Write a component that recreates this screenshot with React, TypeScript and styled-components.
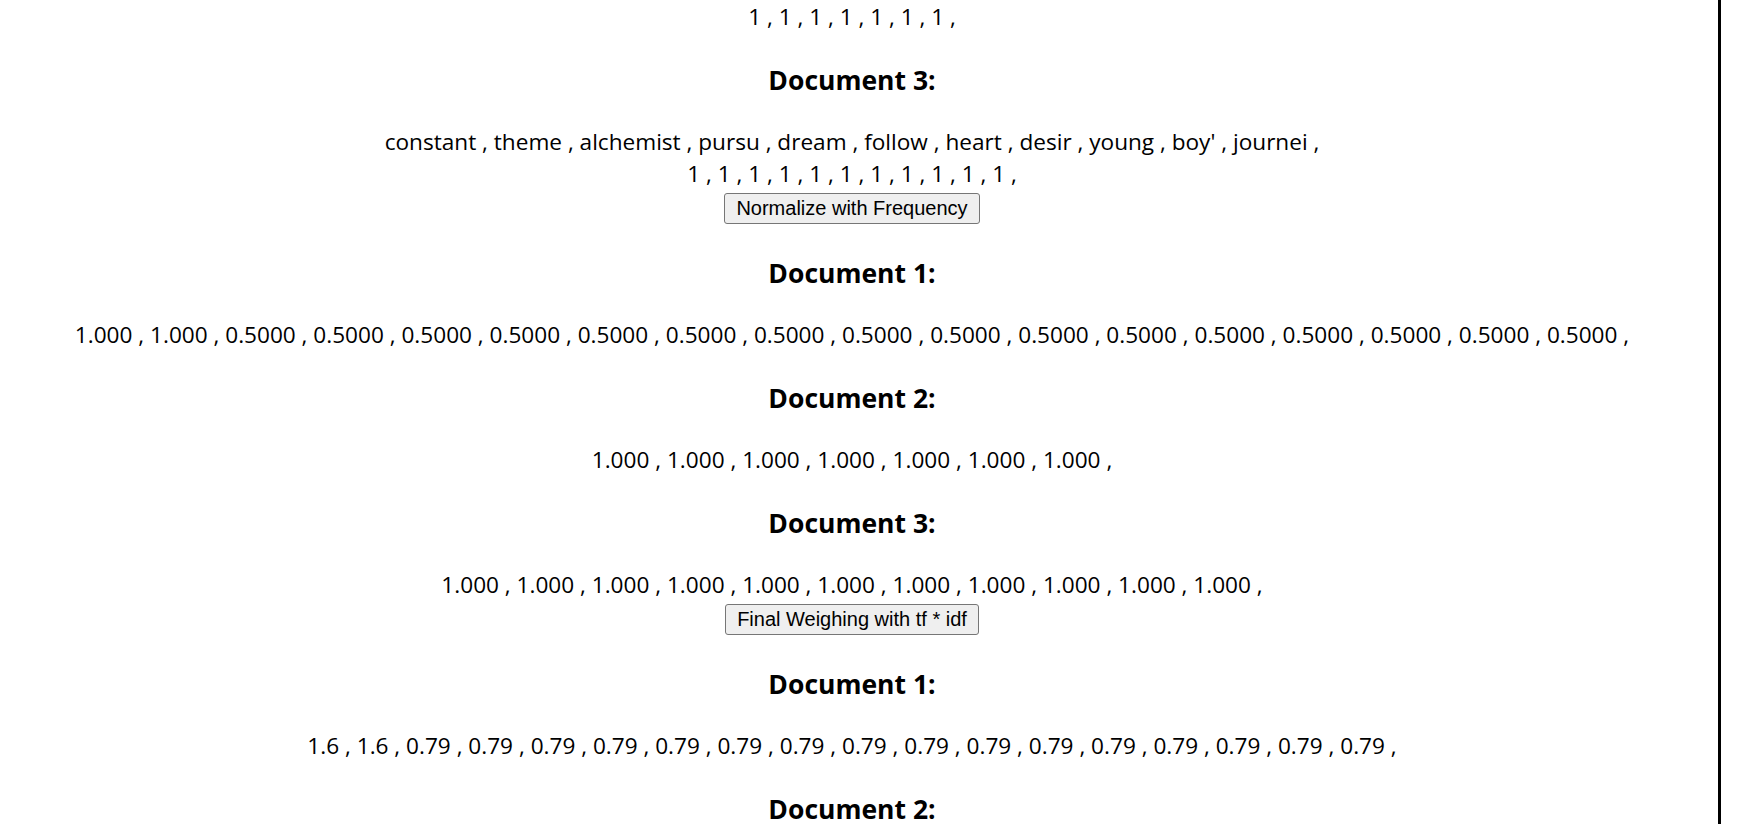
import React from 'react'
import styled, { createGlobalStyle } from 'styled-components'

const GlobalStyle = createGlobalStyle`
  html, body {
    margin: 0;
    padding: 0;
    background: #fff;
    overflow: hidden;
  }
  body {
    font-family: "Open Sans", "Noto Sans", sans-serif;
    color: #000;
  }
`

const Page = styled.div`
  display: flex;
  height: 824px;
  overflow: hidden;
`

const Main = styled.div`
  box-sizing: border-box;
  flex: 0 0 1721px;
  padding: 1px 14px 0 0;
  border-right: 3px solid #000;
  text-align: center;
`

const Heading = styled.h3`
  margin: 29px 0 27px;
  font-size: 26.5px;
  font-weight: 700;
  line-height: 37px;
`

const Line = styled.div`
  font-size: 22.6px;
  line-height: 32px;
  white-space: nowrap;
`

const ButtonRow = styled.div`
  padding: 3px 0 2px;
  line-height: 0;
`

const ActionButton = styled.button`
  height: 31px;
  padding: 0 11px;
  font-family: "Liberation Sans", Arial, sans-serif;
  font-size: 20px;
  line-height: 29px;
  color: #000;
  background: #efefef;
  border: 1px solid #767676;
  border-radius: 3px;
`

const list = (items: (string | number)[]) => items.join(' , ') + ' ,'
const repeat = (v: string, n: number) => Array(n).fill(v)

type Doc = { title: string; lines: string[] }

const counts: Doc[] = [
  {
    title: 'Document 3:',
    lines: [
      list(['constant', 'theme', 'alchemist', 'pursu', 'dream', 'follow', 'heart', 'desir', 'young', "boy'", 'journei']),
      list(repeat('1', 11)),
    ],
  },
]

const normalized: Doc[] = [
  { title: 'Document 1:', lines: [list(['1.000', '1.000', ...repeat('0.5000', 16)])] },
  { title: 'Document 2:', lines: [list(repeat('1.000', 7))] },
  { title: 'Document 3:', lines: [list(repeat('1.000', 11))] },
]

const weighted: Doc[] = [
  { title: 'Document 1:', lines: [list(['1.6', '1.6', ...repeat('0.79', 16)])] },
  { title: 'Document 2:', lines: [list(repeat('0.79', 7))] },
  { title: 'Document 3:', lines: [list(repeat('0.79', 11))] },
]

const DocBlock = ({ doc }: { doc: Doc }) => (
  <>
    <Heading>{doc.title}</Heading>
    {doc.lines.map((l, i) => (
      <Line key={i}>{l}</Line>
    ))}
  </>
)

const App = () => {
  return (
    <>
      <GlobalStyle />
      <Page>
        <Main>
          <Line>{list(repeat('1', 7))}</Line>
          {counts.map((d, i) => <DocBlock key={`c${i}`} doc={d} />)}
          <ButtonRow>
            <ActionButton>Normalize with Frequency</ActionButton>
          </ButtonRow>
          {normalized.map((d, i) => <DocBlock key={`n${i}`} doc={d} />)}
          <ButtonRow>
            <ActionButton>Final Weighing with tf * idf</ActionButton>
          </ButtonRow>
          {weighted.map((d, i) => <DocBlock key={`w${i}`} doc={d} />)}
        </Main>
      </Page>
    </>
  )
}

export default App
